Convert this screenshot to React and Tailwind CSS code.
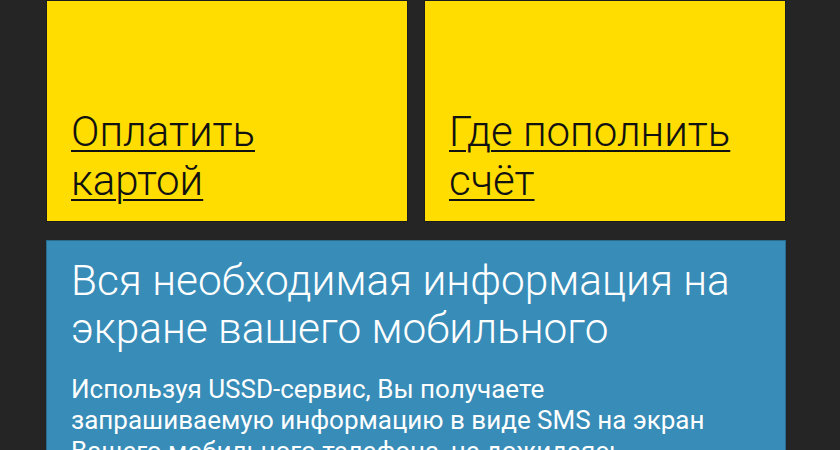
export default function App() {
  const font = { fontFamily: 'Roboto, "Noto Sans", sans-serif' };
  return (
    <div className="w-[840px] h-[450px] overflow-hidden bg-[#252525]" style={font}>
      <div className="ml-[46px] w-[740px]">
        <div className="grid grid-cols-2 gap-4">
          <div className="h-[222px] bg-[#ffdd00] border border-[#1c1c1c] flex flex-col justify-end pl-6 pb-4">
            <a className="text-[42px] leading-[49px] text-[#111] underline decoration-2 underline-offset-[4px] font-light">
              Оплатить<br />картой
            </a>
          </div>
          <div className="h-[222px] bg-[#ffdd00] border border-[#1c1c1c] flex flex-col justify-end pl-6 pb-4">
            <a className="text-[42px] leading-[49px] text-[#111] underline decoration-2 underline-offset-[4px] font-light">
              Где пополнить<br />счёт
            </a>
          </div>
        </div>
        <div className="mt-[18px] bg-[#378cb8] border border-[#2a6c8e] pl-6 pr-4 pt-4 h-[260px]">
          <h2 className="text-[42.4px] leading-[48px] text-white font-light">
            Вся необходимая информация на<br />экране вашего мобильного
          </h2>
          <p className="mt-[21px] text-[26px] leading-[31px] text-white">
            Используя USSD-сервис, Вы получаете<br />запрашиваемую информацию в виде SMS на экран<br />Вашего мобильного телефона, не дожидаясь
          </p>
        </div>
      </div>
    </div>
  );
}
